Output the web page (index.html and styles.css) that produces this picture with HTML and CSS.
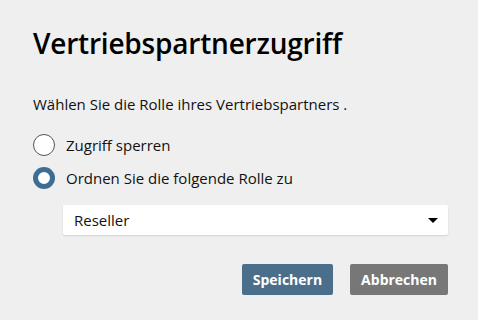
FILE: index.html
```html
<!DOCTYPE html>
<html lang="de">
<head>
    <meta charset="UTF-8">
    <title>Vertriebspartnerzugriff</title>
    <link rel="stylesheet" href="styles.css">
</head>
<body>
    <div class="dialog">
        <h1>Vertriebspartnerzugriff</h1>
        <p class="intro">Wählen Sie die Rolle ihres Vertriebspartners .</p>

        <label class="option">
            <span class="radio"></span>
            Zugriff sperren
        </label>
        <label class="option">
            <span class="radio checked"></span>
            Ordnen Sie die folgende Rolle zu
        </label>

        <div class="select">
            <span>Reseller</span>
            <span class="caret"></span>
        </div>

        <div class="actions">
            <button class="btn btn-primary">Speichern</button>
            <button class="btn btn-secondary">Abbrechen</button>
        </div>
    </div>
</body>
</html>
```

FILE: styles.css
```css
body {
    margin: 0;
    font-family: 'Open Sans', 'Noto Sans', sans-serif;
    background-color: #efefef;
    color: #111;
}

.dialog {
    width: 478px;
    height: 320px;
    box-sizing: border-box;
    padding: 23px 30px 0 33px;
}

h1 {
    margin: 0;
    font-size: 28px;
    font-weight: 600;
    line-height: 40px;
    letter-spacing: -0.2px;
    color: #000;
}

.intro {
    margin: 31px 0 14px;
    font-size: 15px;
    line-height: 20px;
}

.option {
    display: flex;
    align-items: center;
    gap: 11px;
    font-size: 15px;
    height: 33px;
}

.radio {
    width: 20px;
    height: 20px;
    border-radius: 50%;
    border: 1px solid #555;
    background-color: #fff;
}

.radio.checked {
    width: 12px;
    height: 12px;
    border: 5px solid #3c6d95;
}

.select {
    margin: 11px 0 0 30px;
    height: 30px;
    background-color: #fff;
    border-radius: 2px;
    box-shadow: 0 1px 2px rgba(0, 0, 0, 0.12);
    display: flex;
    align-items: center;
    justify-content: space-between;
    padding: 0 10px 0 11px;
    font-size: 15px;
}

.caret {
    width: 0;
    height: 0;
    border-left: 5px solid transparent;
    border-right: 5px solid transparent;
    border-top: 5px solid #000;
}

.actions {
    display: flex;
    justify-content: flex-end;
    gap: 17px;
    margin-top: 29px;
}

.btn {
    font-family: inherit;
    font-size: 14px;
    font-weight: 700;
    color: #fff;
    border: none;
    border-radius: 2px;
    height: 31px;
    padding: 0 11px;
}

.btn-primary {
    background-color: #4b6f8a;
}

.btn-secondary {
    background-color: #777;
}
```
